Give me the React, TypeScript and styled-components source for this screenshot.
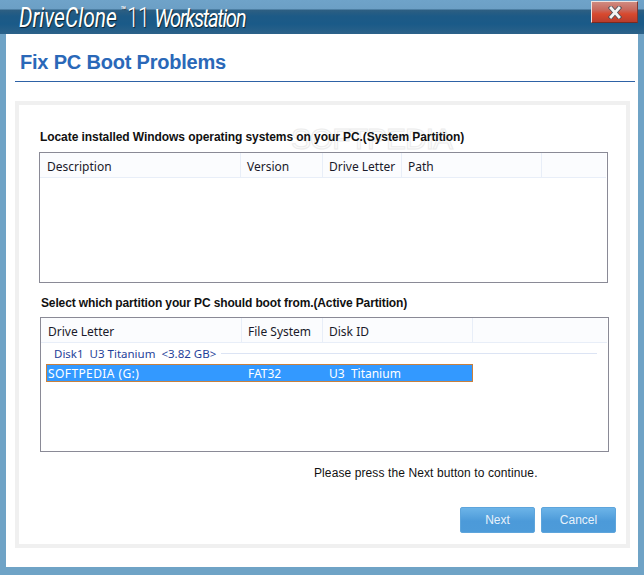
import React from "react";
import styled, { createGlobalStyle } from "styled-components";

const Global = createGlobalStyle`
  html, body { margin: 0; padding: 0; background: #6fa3c6; }
  * { box-sizing: border-box; }
`;

const Win = styled.div`
  width: 644px;
  height: 575px;
  background: #6fa3c6;
  display: flex;
  flex-direction: column;
  overflow: hidden;
`;

const TitleBar = styled.div`
  height: 34px;
  flex: none;
  position: relative;
  padding: 3px 0 0 19px;
  display: flex;
  align-items: center;
  background: linear-gradient(180deg, #6fa3c9 0, #6c9fc5 9px, #2e5f82 10px, #1d5a86 16px, #1a5a88 24px, #2c6289 34px);
`;

const Logo = styled.div`
  font-family: "Roboto", "Liberation Sans", sans-serif;
  color: #fff;
  font-size: 27px;
  line-height: 27px;
  display: flex;
  align-items: flex-start;
  transform: scaleX(0.78);
  transform-origin: left center;
  text-shadow: 1px 1px 1px rgba(0, 0, 0, 0.65);
  white-space: nowrap;
`;

const LogoItalic = styled.span`
  font-style: italic;
`;

const LogoProduct = styled(LogoItalic)`
  font-size: 26px;
  letter-spacing: -1.7px;
  margin-left: 7px;
`;

const LogoVersion = styled.span`
  font-weight: 300;
  letter-spacing: -1px;
`;

const Tm = styled.span`
  font-size: 11px;
  line-height: 12px;
  font-weight: 700;
  margin: 0 1px 0 5px;
`;

const CloseButton = styled.div`
  position: absolute;
  right: 6px;
  top: 1px;
  width: 47px;
  height: 22px;
  border: 1px solid #f0e4e0;
  border-bottom-color: #7a2a20;
  border-right-color: #7a3a34;
  background: linear-gradient(180deg, #cf8a80 0, #c8685c 40%, #d8492e 60%, #b83c2c 100%);
  display: flex;
  align-items: center;
  justify-content: center;
`;

const Body = styled.div`
  flex: none;
  height: 533px;
  margin: 0 6px;
  background: #fff;
  display: flex;
  flex-direction: column;
`;

const Header = styled.div`
  height: 48px;
  margin: 0 3px 0 9px;
  border-bottom: 1px solid #2e62a6;
  padding: 16px 0 0 5px;
  font-family: "Liberation Sans", Arial, sans-serif;
  font-weight: 700;
  font-size: 20px;
  letter-spacing: -0.2px;
  line-height: 24px;
  color: #2a68b8;
`;

const Panel = styled.div`
  margin: 19px 8px 0 9px;
  height: 447px;
  border: 4px solid #f0f0f0;
  position: relative;
  display: flex;
  flex-direction: column;
  padding: 25px 0 0 21px;
`;

const Watermark = styled.div`
  position: absolute;
  left: 272px;
  top: 17px;
  font-family: "Liberation Sans", Arial, sans-serif;
  font-size: 30px;
  line-height: 34px;
  letter-spacing: -1px;
  color: #fdfdfd;
  -webkit-text-stroke: 1px #ececec;
  white-space: nowrap;
`;

const Caption = styled.div<{ $left: number; $top: number; $ls: number }>`
  font-family: "Liberation Sans", Arial, sans-serif;
  font-weight: 700;
  font-size: 12px;
  line-height: 14px;
  letter-spacing: ${(p) => p.$ls}px;
  color: #111;
  position: relative;
  margin: ${(p) => p.$top}px 0 0 ${(p) => p.$left}px;
`;

const Table = styled.div<{ $left: number; $h: number; $top: number }>`
  position: relative;
  width: 569px;
  height: ${(p) => p.$h}px;
  margin: ${(p) => p.$top}px 0 0 ${(p) => p.$left}px;
  border: 1px solid #8a8a96;
  background: #fff;
  font-family: "Noto Sans", "DejaVu Sans", sans-serif;
  font-size: 12px;
`;

const HeadRow = styled.div`
  height: 25px;
  display: flex;
  margin-right: 1px;
  background: #fbfcfe;
  border-bottom: 1px solid #e8eef8;
`;

const HeadCell = styled.div<{ $w?: number }>`
  flex: ${(p) => (p.$w ? `0 0 ${p.$w}px` : "1")};
  padding-left: 6px;
  line-height: 27px;
  color: #1a1a2a;
  border-right: 1px solid #e8eef8;
  white-space: nowrap;
  &:first-child { padding-left: 7px; }
  &:last-child { border-right: none; }
`;

const Group = styled.div`
  height: 21px;
  display: flex;
  align-items: center;
  padding: 0 11px 0 13px;
  color: #1f3f9a;
  font-size: 11.5px;
  gap: 5px;
  white-space: pre;
`;

const GroupLine = styled.div`
  flex: 1;
  height: 1px;
  background: #dce4f4;
`;

const SelRow = styled.div`
  width: 427px;
  margin: 0 0 0 5px;
  height: 18px;
  display: flex;
  background: #3399ff;
  color: #fff;
  line-height: 17px;
  border: 1px solid #c9803c;
`;

const SelCell = styled.div<{ $w?: number; $ls?: number }>`
  flex: ${(p) => (p.$w ? `0 0 ${p.$w}px` : "1")};
  padding-left: 1px;
  white-space: pre;
  letter-spacing: ${(p) => p.$ls ?? 0}px;
`;

const Hint = styled.div`
  font-family: "Liberation Sans", Arial, sans-serif;
  font-size: 12px;
  line-height: 14px;
  letter-spacing: 0.1px;
  color: #111;
  margin: 14px 0 0 274px;
`;

const Buttons = styled.div`
  display: flex;
  gap: 6px;
  margin: 27px 0 0 420px;
`;

const Button = styled.div`
  width: 75px;
  height: 26px;
  border-radius: 2px;
  background: linear-gradient(180deg, #6cb4e8 0, #4c9ad9 55%, #4d9bd9 100%);
  border: 1px solid #5ea5dc;
  color: #e8f2fb;
  text-align: center;
  font-family: "Liberation Sans", Arial, sans-serif;
  font-size: 12px;
  line-height: 24px;
`;

export default function App() {
  return (
    <Win>
      <Global />
      <TitleBar>
        <Logo>
          <LogoItalic>DriveClone</LogoItalic>
          <Tm>™</Tm>
          <LogoVersion>11</LogoVersion>
          <LogoProduct>Workstation</LogoProduct>
        </Logo>
        <CloseButton>
          <svg width="14" height="13" viewBox="0 0 14 13">
            <path d="M3 2 L11 11 M11 2 L3 11" stroke="#4a4f58" strokeWidth="4.4" strokeLinecap="square" />
            <path d="M3 2 L11 11 M11 2 L3 11" stroke="#f4f4f4" strokeWidth="2.8" strokeLinecap="square" />
          </svg>
        </CloseButton>
      </TitleBar>
      <Body>
        <Header>Fix PC Boot Problems</Header>
        <Panel>
          <Watermark>SOFTPEDIA</Watermark>
          <Caption $left={0} $top={0} $ls={-0.07}>Locate installed Windows operating systems on your PC.(System Partition)</Caption>
          <Table $left={-1} $h={131} $top={8}>
            <HeadRow>
              <HeadCell $w={201}>Description</HeadCell>
              <HeadCell $w={82}>Version</HeadCell>
              <HeadCell $w={79}>Drive Letter</HeadCell>
              <HeadCell $w={140}>Path</HeadCell>
              <HeadCell />
            </HeadRow>
          </Table>
          <Caption $left={1} $top={13} $ls={-0.13}>Select which partition your PC should boot from.(Active Partition)</Caption>
          <Table $left={0} $h={135} $top={7}>
            <HeadRow>
              <HeadCell $w={201}>Drive Letter</HeadCell>
              <HeadCell $w={81}>File System</HeadCell>
              <HeadCell $w={150}>Disk ID</HeadCell>
              <HeadCell />
            </HeadRow>
            <Group>
              <span>Disk1  U3 Titanium  &lt;3.82 GB&gt;</span>
              <GroupLine />
            </Group>
            <SelRow>
              <SelCell $w={200} $ls={0.4}>SOFTPEDIA (G:)</SelCell>
              <SelCell $w={81}>FAT32</SelCell>
              <SelCell>U3  Titanium</SelCell>
            </SelRow>
          </Table>
          <Hint>Please press the Next button to continue.</Hint>
          <Buttons>
            <Button>Next</Button>
            <Button>Cancel</Button>
          </Buttons>
        </Panel>
      </Body>
    </Win>
  );
}
